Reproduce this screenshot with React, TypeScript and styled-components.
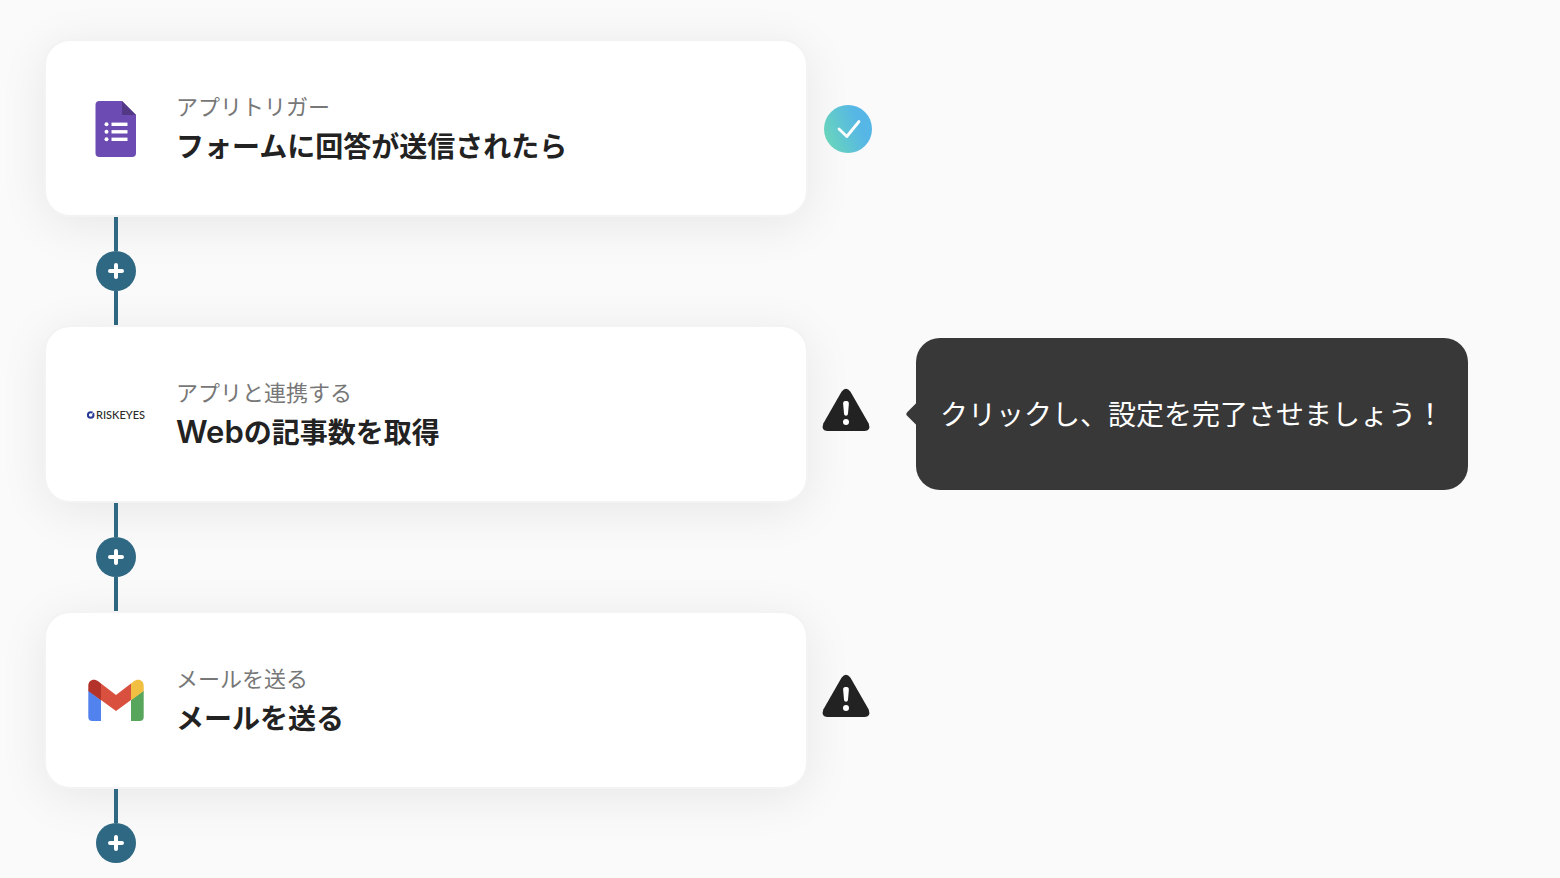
import React from "react";
import styled, { createGlobalStyle } from "styled-components";

const GlobalStyle = createGlobalStyle`
  * { box-sizing: border-box; }
  body {
    margin: 0;
    background: #fafafa;
    color: #222;
    font-family: Inter, "Noto Sans CJK JP", sans-serif;
  }
`;

const Flow = styled.main`
  padding: 39px 44px 15px;
`;

const StepRow = styled.section`
  display: flex;
  align-items: center;
  gap: 16px;
`;

const Card = styled.article`
  flex: 0 1 764px;
  min-width: 0;
  min-height: 178px;
  display: flex;
  align-items: center;
  gap: 28px;
  padding: 24px 38px;
  background: #fff;
  background-clip: padding-box;
  border: 2px solid #f3f3f3;
  border-radius: 26px;
  box-shadow: 0 8px 48px rgba(0, 0, 0, 0.08);
`;

const AppIcon = styled.svg`
  flex: none;
  width: 64px;
  height: 64px;
`;

const Labels = styled.div`
  min-width: 0;
`;

const Kind = styled.p`
  margin: 0;
  font-size: 22px;
  line-height: 38px;
  color: #777;
`;

const Title = styled.h2`
  margin: 0;
  font-size: 28px;
  line-height: 42px;
  font-weight: 600;
`;

const Latin = styled.span`
  font-size: 31px;
  line-height: 1;
`;

const StatusIcon = styled.svg`
  flex: none;
  width: 48px;
  height: 48px;
  overflow: visible;
`;

const Hint = styled.div`
  position: relative;
  flex: none;
  margin-left: 28px;
  padding: 56px 24px 54px;
  border-radius: 24px;
  background: #383838;
  color: #fff;
  font-size: 28px;
  line-height: 42px;
  white-space: nowrap;

  &::before {
    content: "";
    position: absolute;
    left: -7px;
    top: 50%;
    width: 18px;
    height: 18px;
    margin-top: -9px;
    border-radius: 3px;
    background: #383838;
    transform: rotate(45deg);
  }
`;

const Connector = styled.div`
  width: 144px;
  display: flex;
  flex-direction: column;
  align-items: center;
`;

const Line = styled.div`
  width: 4px;
  height: 34px;
  background: #2f6882;
`;

const AddButton = styled.button`
  display: flex;
  align-items: center;
  justify-content: center;
  width: 40px;
  height: 40px;
  padding: 0;
  border: 0;
  border-radius: 50%;
  background: #2f6882;
  color: #fff;
  cursor: pointer;
`;

function FormsIcon() {
  return (
    <AppIcon viewBox="0 0 64 64" aria-hidden="true">
      <path d="M15.500 5H38L52 19V57a4 4 0 0 1-4 4H15.500a4 4 0 0 1-4-4V9a4 4 0 0 1 4-4Z" fill="#6c4bb2" />
      <path d="M38 5L52 19H38Z" fill="#533886" />
      <g fill="#fff">
        <circle cx="22.500" cy="28.300" r="2" />
        <circle cx="22.500" cy="35.800" r="2" />
        <circle cx="22.500" cy="43.300" r="2" />
        <rect x="27.500" y="26.600" width="16" height="3.400" />
        <rect x="27.500" y="34.100" width="16" height="3.400" />
        <rect x="27.500" y="41.600" width="16" height="3.400" />
      </g>
    </AppIcon>
  );
}

function RiskEyesIcon() {
  return (
    <AppIcon viewBox="0 0 64 64" role="img" aria-label="RISKEYES">
      <circle cx="6.700" cy="33" r="2.800" fill="none" stroke="#283a97" strokeWidth="2" />
      <path d="M6.700 33L10 29.700" stroke="#fff" strokeWidth="1" />
      <text x="12" y="37" fontFamily="Lato, sans-serif" fontSize="11" fontWeight="500" fill="#2b2b2b">
        RISKEYES
      </text>
    </AppIcon>
  );
}

function GmailIcon() {
  return (
    <AppIcon viewBox="0 0 64 64" aria-hidden="true">
      <path d="M4.300 22.500L17 32V53H8.300a4 4 0 0 1-4-4Z" fill="#5282ee" />
      <path d="M47 32L59.700 22.500V49a4 4 0 0 1-4 4H47Z" fill="#58a65c" />
      <path d="M17 15.500L32 27L47 15.500V32L32 43L17 32Z" fill="#d9503f" />
      <path d="M4.300 23V18C4.300 12 10 10 14.500 13.600L17 15.500V32.300Z" fill="#b3332a" />
      <path d="M59.700 23V18C59.700 12 54 10 49.500 13.600L47 15.500V32.300Z" fill="#f1bf42" />
    </AppIcon>
  );
}

function DoneStatus() {
  return (
    <StatusIcon viewBox="0 0 48 48" role="img" aria-label="設定済み">
      <defs>
        <linearGradient id="done" x1="0" y1="0.700" x2="1" y2="0.300">
          <stop offset="0.050" stopColor="#68d4bd" />
          <stop offset="0.750" stopColor="#56b6e6" />
        </linearGradient>
      </defs>
      <circle cx="24" cy="25" r="24" fill="url(#done)" />
      <path d="M15 25L22.800 32.500L35 17.500" fill="none" stroke="#fff" strokeWidth="2.800" strokeLinecap="round" strokeLinejoin="round" />
    </StatusIcon>
  );
}

function WarningStatus() {
  return (
    <StatusIcon viewBox="0 0 48 48" role="img" aria-label="設定が必要です">
      <path d="M17.500 1.700Q22 -4 26.500 1.700L44.700 33.500Q47.200 41 40.500 41H3.500Q-3.200 41 -0.700 33.500Z" fill="#222" />
      <path d="M22 11C19.300 11 19 12.500 19.200 14.500L20 23.500C20.200 26.500 23.800 26.500 24 23.500L24.800 14.500C25 12.500 24.700 11 22 11Z" fill="#fff" />
      <circle cx="22" cy="32" r="3" fill="#fff" />
    </StatusIcon>
  );
}

function PlusIcon() {
  return (
    <svg width="16" height="16" viewBox="0 0 16 16" aria-hidden="true">
      <path d="M8 2V14M2 8H14" stroke="currentColor" strokeWidth="4" strokeLinecap="round" />
    </svg>
  );
}

const steps = [
  { kind: "アプリトリガー", title: "フォームに回答が送信されたら", Icon: FormsIcon, done: true },
  {
    kind: "アプリと連携する",
    latin: "Web",
    title: "の記事数を取得",
    Icon: RiskEyesIcon,
    done: false,
    hint: "クリックし、設定を完了させましょう！",
  },
  { kind: "メールを送る", title: "メールを送る", Icon: GmailIcon, done: false },
];

export default function App() {
  return (
    <>
      <GlobalStyle />
      <Flow>
        {steps.map(({ kind, latin, title, Icon, done, hint }, index) => (
          <React.Fragment key={title}>
            <StepRow>
              <Card>
                <Icon />
                <Labels>
                  <Kind>{kind}</Kind>
                  <Title>
                    {latin && <Latin>{latin}</Latin>}
                    {title}
                  </Title>
                </Labels>
              </Card>
              {done ? <DoneStatus /> : <WarningStatus />}
              {hint && <Hint role="tooltip">{hint}</Hint>}
            </StepRow>
            <Connector>
              <Line />
              <AddButton type="button" aria-label="ステップを追加">
                <PlusIcon />
              </AddButton>
              {index < steps.length - 1 && <Line />}
            </Connector>
          </React.Fragment>
        ))}
      </Flow>
    </>
  );
}
